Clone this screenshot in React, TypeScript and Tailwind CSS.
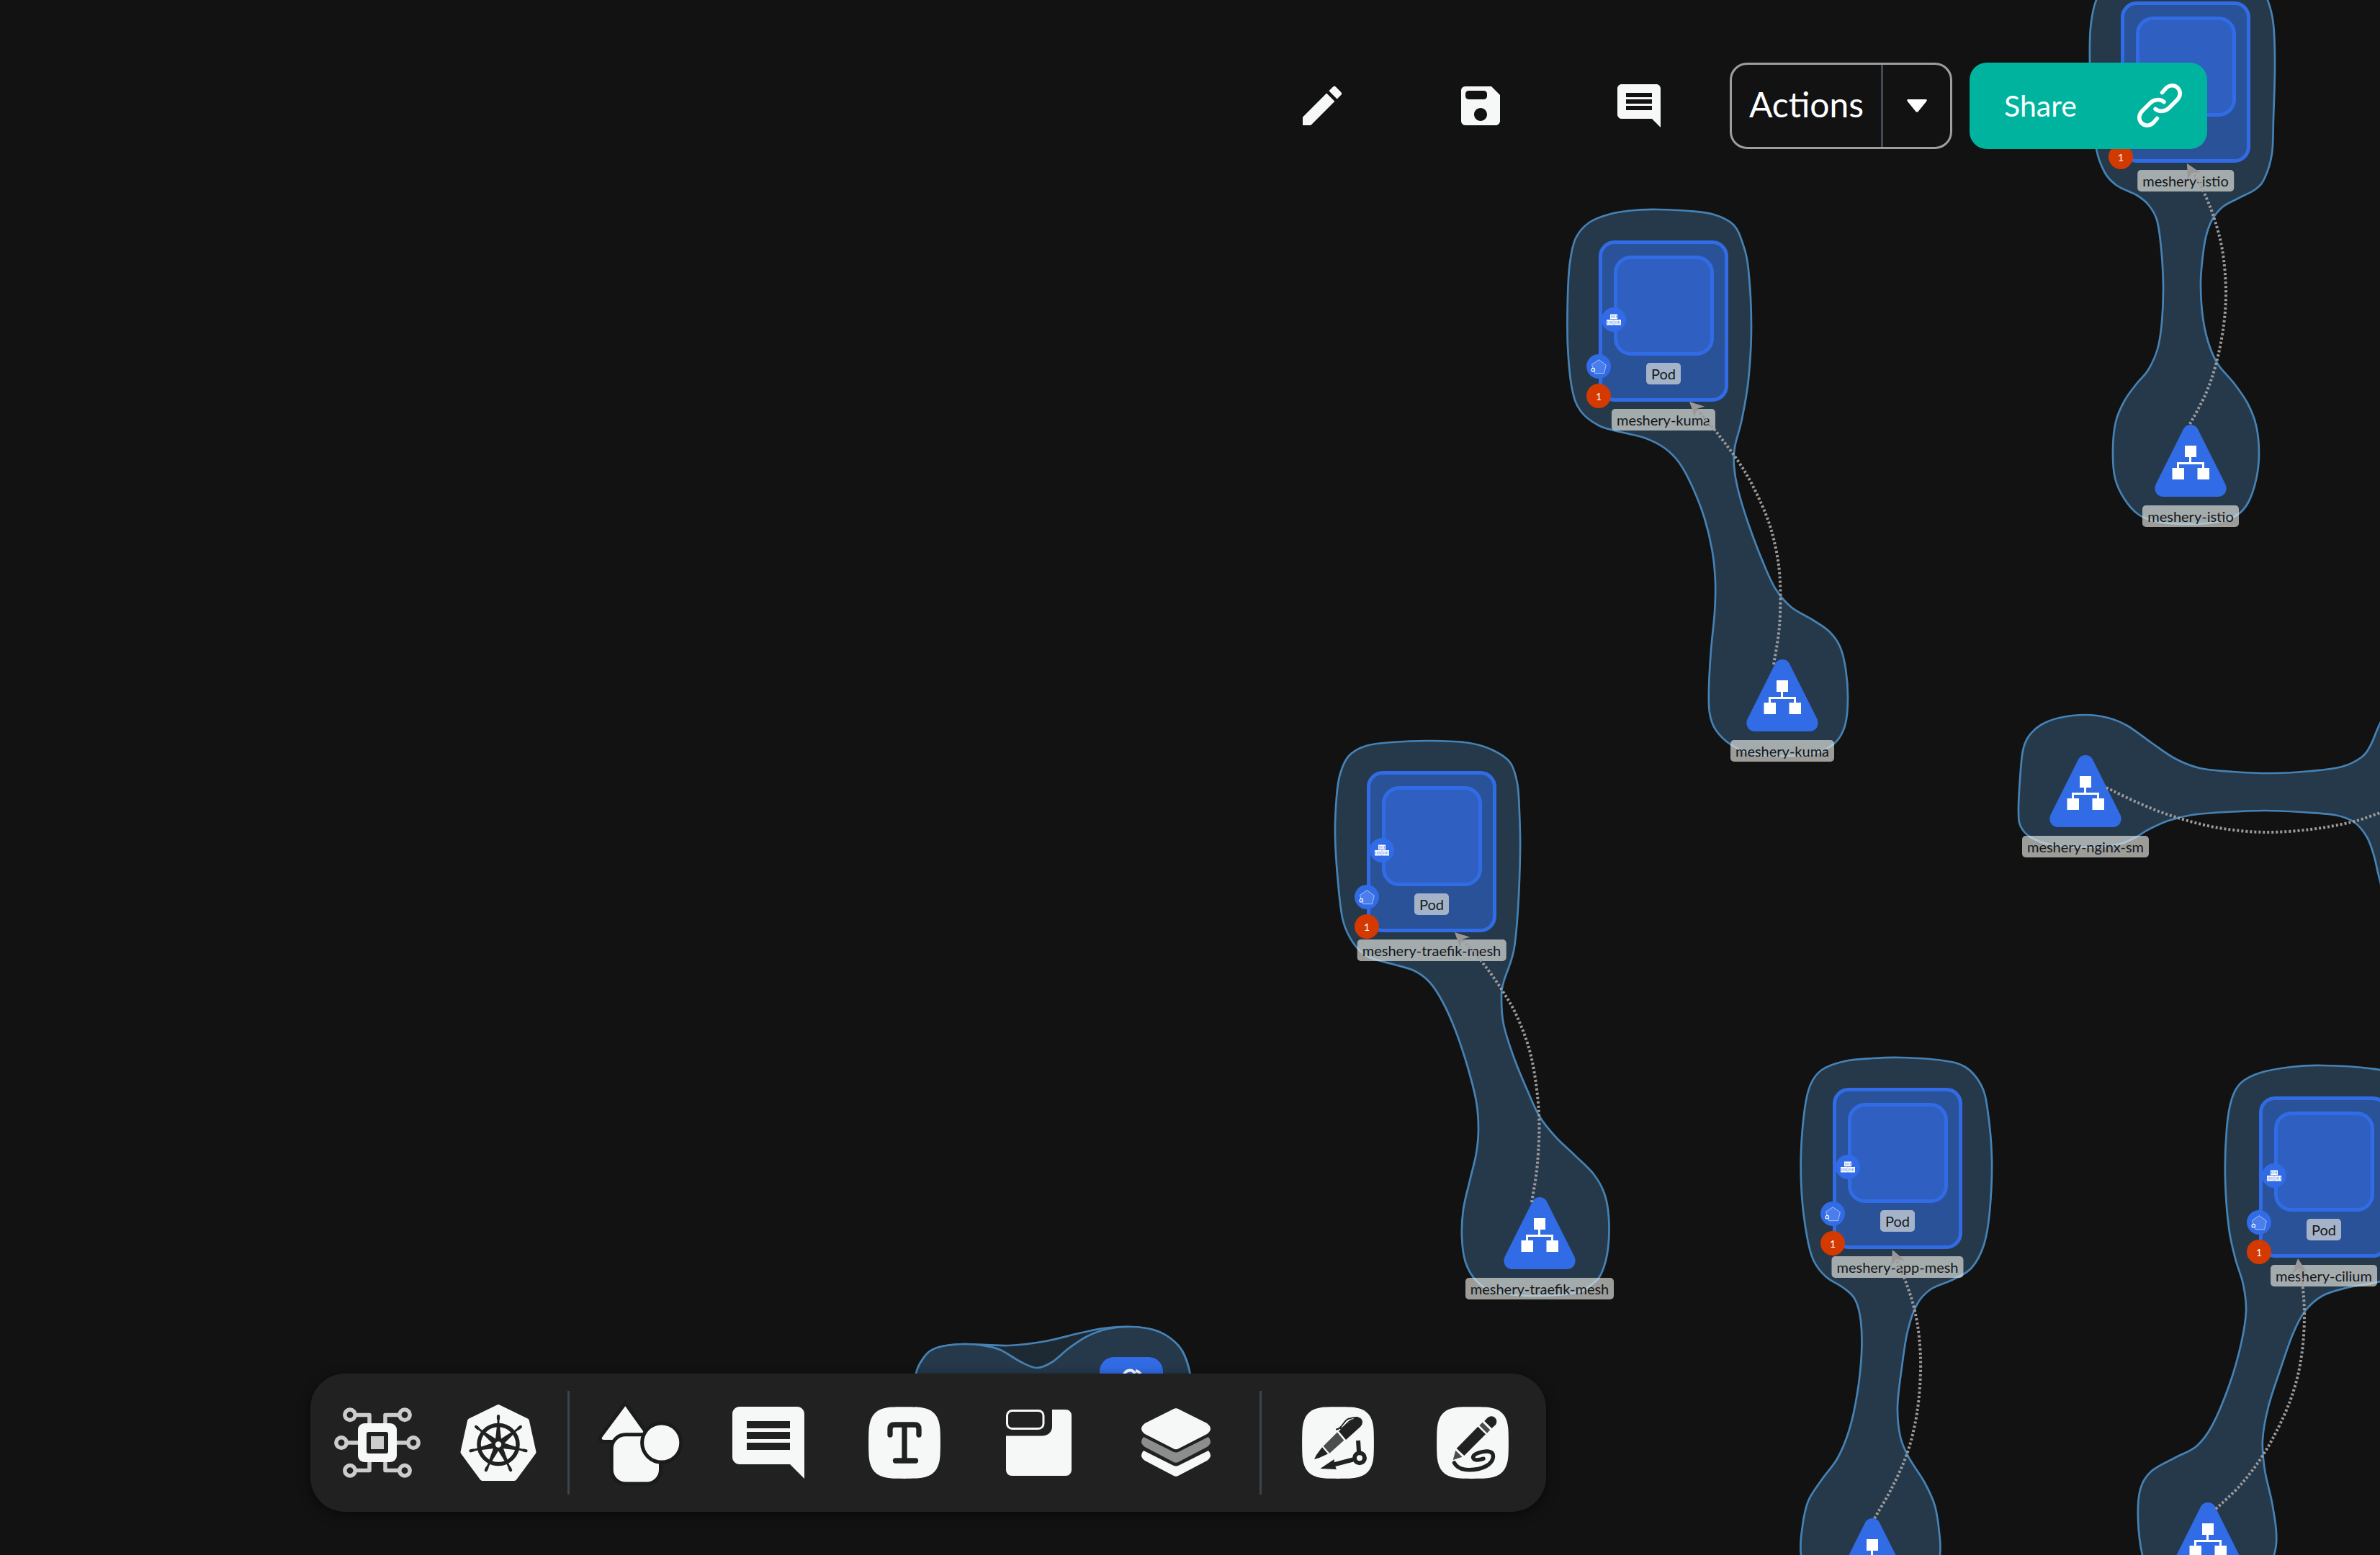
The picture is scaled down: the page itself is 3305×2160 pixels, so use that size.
import { type ReactNode } from "react";
import { MdComment, MdEdit } from "react-icons/md";

type Point = [number, number];

/* Smooth curve through the given points (Catmull-Rom converted to Bézier). */
function smooth(points: Point[], closed: boolean): string {
  const n = points.length;
  const at = (i: number): Point =>
    closed ? points[(i + n) % n] : points[Math.max(0, Math.min(n - 1, i))];
  let d = `M${points[0][0]} ${points[0][1]}`;
  const segments = closed ? n : n - 1;
  for (let i = 0; i < segments; i++) {
    const [p0, p1, p2, p3] = [at(i - 1), at(i), at(i + 1), at(i + 2)];
    d += `C${p1[0] + (p2[0] - p0[0]) / 6} ${p1[1] + (p2[1] - p0[1]) / 6} ${p2[0] - (p3[0] - p1[0]) / 6} ${p2[1] - (p3[1] - p1[1]) / 6} ${p2[0]} ${p2[1]}`;
  }
  return closed ? d + "Z" : d;
}

const hulls: Point[][] = [
  [[2303, 291], [2345, 293], [2380, 298], [2407, 312], [2420, 338], [2428, 375], [2432, 453], [2428, 527], [2419, 582], [2409, 621], [2408, 647], [2413, 678], [2427, 725], [2447, 778], [2465, 817], [2487, 843], [2517, 861], [2540, 877], [2555, 898], [2563, 929], [2566, 971], [2562, 1008], [2547, 1033], [2517, 1047], [2480, 1050], [2433, 1047], [2403, 1034], [2382, 1013], [2374, 990], [2373, 956], [2376, 903], [2381, 851], [2382, 809], [2378, 767], [2367, 720], [2350, 676], [2332, 643], [2311, 622], [2283, 608], [2250, 600], [2220, 591], [2195, 571], [2183, 540], [2177, 480], [2177, 412], [2180, 365], [2188, 331], [2207, 309], [2237, 297], [2270, 292]],
  [[3035, -42], [3105, -36], [3136, -22], [3149, 0], [3157, 34], [3159, 92], [3157, 165], [3155, 213], [3145, 247], [3132, 263], [3107, 276], [3087, 287], [3072, 305], [3063, 330], [3058, 364], [3056, 397], [3059, 441], [3067, 477], [3080, 506], [3102, 532], [3121, 560], [3133, 591], [3137, 630], [3133, 666], [3122, 698], [3107, 715], [3080, 725], [3037, 728], [2997, 725], [2970, 715], [2950, 693], [2937, 664], [2934, 625], [2938, 586], [2950, 557], [2967, 533], [2983, 514], [2996, 485], [3002, 448], [3004, 397], [3001, 344], [2995, 305], [2983, 284], [2967, 271], [2940, 258], [2923, 240], [2911, 207], [2904, 150], [2902, 87], [2903, 39], [2911, 0], [2930, -25], [2975, -38]],
  [[1987, 1029], [2040, 1032], [2073, 1042], [2097, 1059], [2107, 1088], [2110, 1129], [2111, 1182], [2108, 1262], [2102, 1321], [2088, 1364], [2085, 1386], [2088, 1423], [2103, 1471], [2122, 1517], [2138, 1551], [2160, 1579], [2187, 1605], [2213, 1631], [2228, 1658], [2234, 1691], [2233, 1734], [2225, 1766], [2213, 1782], [2187, 1796], [2120, 1800], [2073, 1793], [2050, 1779], [2035, 1753], [2030, 1718], [2032, 1680], [2041, 1640], [2050, 1602], [2053, 1568], [2050, 1530], [2038, 1482], [2021, 1431], [2003, 1391], [1985, 1364], [1963, 1348], [1933, 1339], [1900, 1329], [1880, 1311], [1865, 1279], [1858, 1225], [1854, 1161], [1856, 1107], [1861, 1075], [1873, 1050], [1897, 1036], [1933, 1031]],
  [[2640, 1469], [2697, 1473], [2729, 1482], [2751, 1507], [2760, 1541], [2766, 1610], [2763, 1683], [2755, 1729], [2738, 1761], [2713, 1777], [2681, 1791], [2662, 1812], [2649, 1849], [2641, 1899], [2635, 1954], [2639, 1996], [2651, 2025], [2673, 2060], [2687, 2092], [2693, 2129], [2694, 2160], [2685, 2215], [2600, 2240], [2515, 2215], [2501, 2160], [2503, 2120], [2511, 2085], [2530, 2055], [2552, 2025], [2568, 1986], [2579, 1936], [2585, 1881], [2584, 1835], [2576, 1805], [2560, 1789], [2535, 1773], [2518, 1750], [2509, 1716], [2502, 1660], [2501, 1601], [2506, 1541], [2514, 1507], [2530, 1486], [2562, 1474], [2600, 1470]],
  [[3225, 1480], [3290, 1484], [3320, 1492], [3342, 1520], [3355, 1600], [3350, 1720], [3335, 1765], [3305, 1780], [3258, 1789], [3225, 1800], [3201, 1821], [3184, 1853], [3166, 1904], [3150, 1954], [3142, 2000], [3145, 2042], [3155, 2087], [3161, 2129], [3158, 2160], [3140, 2210], [3065, 2225], [2990, 2200], [2975, 2160], [2969, 2110], [2972, 2069], [2987, 2044], [3020, 2025], [3050, 2009], [3072, 1980], [3096, 1923], [3112, 1867], [3119, 1821], [3115, 1784], [3104, 1748], [3095, 1705], [3090, 1637], [3092, 1569], [3099, 1527], [3112, 1504], [3139, 1490], [3182, 1482]],
  [[2896, 993], [2927, 997], [2954, 1008], [2988, 1032], [3021, 1054], [3055, 1067], [3101, 1072], [3155, 1074], [3209, 1071], [3252, 1065], [3279, 1052], [3292, 1035], [3305, 1005], [3330, 960], [3400, 960], [3400, 1260], [3320, 1262], [3305, 1223], [3297, 1190], [3287, 1163], [3269, 1142], [3242, 1132], [3195, 1128], [3145, 1126], [3091, 1128], [3044, 1132], [3011, 1140], [2984, 1152], [2964, 1164], [2941, 1173], [2897, 1177], [2850, 1174], [2820, 1163], [2806, 1148], [2803, 1127], [2805, 1083], [2809, 1043], [2817, 1023], [2834, 1007], [2860, 997]],
];

const outerGroup: Point[] = [[1262, 1960], [1272, 1908], [1280, 1890], [1291, 1877], [1309, 1870], [1340, 1867], [1401, 1869], [1452, 1863], [1498, 1852], [1533, 1845], [1570, 1843], [1601, 1847], [1624, 1858], [1642, 1877], [1653, 1910], [1658, 1960]];
const innerGroup: Point[] = [[1262, 1960], [1272, 1908], [1280, 1890], [1291, 1877], [1309, 1870], [1340, 1867], [1365, 1869], [1389, 1875], [1418, 1892], [1440, 1900], [1461, 1892], [1484, 1873], [1510, 1856], [1538, 1846], [1570, 1843], [1601, 1847], [1624, 1858], [1642, 1877], [1653, 1910], [1658, 1960]];

const edges: { points: Point[]; tip?: Point; angle?: number }[] = [
  { points: [[2463, 923], [2471, 870], [2472, 809], [2466, 762], [2452, 714], [2423, 655], [2385, 602], [2355, 567]], tip: [2346, 558], angle: -46 },
  { points: [[3041, 589], [3063, 547], [3078, 503], [3088, 451], [3091, 402], [3086, 347], [3074, 301], [3059, 264], [3044, 237]], tip: [3037, 227], angle: -29 },
  { points: [[2127, 1670], [2135, 1616], [2137, 1546], [2127, 1471], [2108, 1415], [2085, 1374], [2057, 1335], [2030, 1305]], tip: [2020, 1295], angle: -46 },
  { points: [[2603, 2109], [2627, 2067], [2649, 2017], [2662, 1963], [2667, 1905], [2665, 1857], [2658, 1817], [2647, 1782], [2633, 1748]], tip: [2628, 1736], angle: -22 },
  { points: [[3077, 2096], [3112, 2062], [3144, 2019], [3171, 1968], [3188, 1922], [3197, 1876], [3200, 1830], [3198, 1790], [3193, 1760]], tip: [3191, 1748], angle: -6 },
  { points: [[2925, 1094], [2971, 1116], [3021, 1135], [3081, 1150], [3145, 1156], [3209, 1152], [3265, 1142], [3305, 1129], [3340, 1115]] },
];

const pods = [
  { name: "meshery-kuma", x: 2220, y: 334 },
  { name: "meshery-istio", x: 2945, y: 2 },
  { name: "meshery-traefik-mesh", x: 1898, y: 1071 },
  { name: "meshery-app-mesh", x: 2545, y: 1511 },
  { name: "meshery-cilium", x: 3137, y: 1523 },
];

const services = [
  { id: "kuma", caption: "meshery-kuma", x: 2425, y: 916 },
  { id: "istio", caption: "meshery-istio", x: 2992, y: 590 },
  { id: "traefik", caption: "meshery-traefik-mesh", x: 2088, y: 1663 },
  { id: "nginx", caption: "meshery-nginx-sm", x: 2846, y: 1049 },
  { id: "app", x: 2550, y: 2109 },
  { id: "cilium", x: 3016, y: 2087 },
];

function NodeLabel({ children }: { children: string }) {
  return (
    <span className="rounded-[5px] bg-[rgba(230,232,226,0.65)] px-[7px] text-[20px] leading-[30px] font-normal whitespace-nowrap text-[#14171a]">
      {children}
    </span>
  );
}

function ContainerBadge() {
  return (
    <svg viewBox="-17 -17 34 34" className="absolute top-[93px] left-[4px] size-[34px]">
      <circle r="17" fill="#316ce6" />
      <path d="M-5 -7.5H5V-.8H-5ZM-10 0H-.2V7.4H-10ZM.2 0H10V7.4H.2Z" fill="#fff" />
      <path
        d="M-3.2 -6V-2.2M-1 -6V-2.2M1.2 -6V-2.2M3.4 -6V-2.2M-8.3 1.7V5.7M-6.2 1.7V5.7M-4 1.7V5.7M-1.9 1.7V5.7M2 1.7V5.7M4.2 1.7V5.7M6.3 1.7V5.7M8.4 1.7V5.7"
        stroke="#7ea2f0"
        strokeWidth="1"
      />
    </svg>
  );
}

function PodBadge() {
  return (
    <svg viewBox="-17 -17 34 34" className="absolute top-[158px] left-[-17px] size-[34px]">
      <circle r="17" fill="#316ce6" />
      <path d="M.3 -9.3L10.3 -2L7.5 9.7H-5.2L-9.6 -2.6Z" fill="#4a7eed" stroke="#a9c3f8" strokeWidth="1" strokeLinejoin="round" />
      <circle cx="-7.7" cy="4.7" r="2.3" fill="#4a7eed" stroke="#fff" strokeWidth="1.2" />
    </svg>
  );
}

function Pod({ name, x, y }: { name: string; x: number; y: number }) {
  return (
    <div className="absolute" style={{ left: x, top: y }}>
      <div className="flex h-[224px] w-[180px] flex-col items-center rounded-[22px] border-[5px] border-[#316ce6] bg-[#2a5298] pt-4">
        <div className="size-[139px] rounded-[24px] border-[5px] border-[#316ce6] bg-[#2f5fc0]" />
        <div className="mt-2.5 flex">
          <NodeLabel>Pod</NodeLabel>
        </div>
      </div>
      <ContainerBadge />
      <PodBadge />
      <span className="absolute top-[199px] left-[-17px] flex size-[34px] items-center justify-center rounded-full bg-[#d43900] text-[14px] text-white">
        1
      </span>
      <div className="absolute top-[234px] left-1/2 flex -translate-x-1/2">
        <NodeLabel>{name}</NodeLabel>
      </div>
    </div>
  );
}

function Service({ caption, x, y }: { caption?: string; x: number; y: number }) {
  return (
    <div className="absolute flex w-[100px] flex-col items-center gap-3" style={{ left: x, top: y }}>
      <svg viewBox="0 0 100 100" className="size-[100px] shrink-0">
        <path d="M40 6C44 -2 56 -2 60 6L98.5 83C102 91 97 100 88 100H12C3 100 -2 91 1.5 83Z" fill="#316ce6" />
        <path d="M42 29H58V45H51V52H69V60H76V76H59.5V60H66V55H34V60H41V76H24.5V60H31V52H48V45H42Z" fill="#fff" />
      </svg>
      {caption ? <NodeLabel>{caption}</NodeLabel> : null}
    </div>
  );
}

function Canvas() {
  return (
    <main className="absolute inset-0 overflow-hidden">
      <svg className="absolute inset-0 size-full" fill="none">
        <g stroke="#4682b4" strokeWidth="2.7">
          {hulls.map((points, i) => (
            <path key={i} d={smooth(points, true)} fill="#25394b" />
          ))}
          <path d={smooth(outerGroup, false)} fill="#1e2a33" />
          <path d={smooth(innerGroup, false)} fill="#25394b" />
        </g>
        <rect x="1527" y="1885" width="88" height="88" rx="20" fill="#316ce6" />
        <path d="M1561 1910a8 8 0 0 1 15 -2M1577 1904a9 9 0 0 1 7 6" stroke="#fff" strokeWidth="4" />
      </svg>
      {pods.map((p) => (
        <Pod key={p.name} {...p} />
      ))}
      {services.map((s) => (
        <Service key={s.id} caption={s.caption} x={s.x} y={s.y} />
      ))}
      <svg className="absolute inset-0 size-full" fill="none">
        {edges.map(({ points, tip, angle }, i) => (
          <g key={i}>
            <path d={smooth(points, false)} stroke="#9e9a9a" strokeWidth="4" strokeDasharray="3 3" />
            {tip ? (
              <path d="M0 0L10 20L0 14L-10 20Z" fill="#9b9797" transform={`translate(${tip[0]} ${tip[1]}) rotate(${angle})`} />
            ) : null}
          </g>
        ))}
      </svg>
    </main>
  );
}

function SaveIcon() {
  return (
    <svg viewBox="0 0 24 24" className="size-[72px]" fill="currentColor" fillRule="evenodd">
      <path d="M17 3H5c-1.11 0-2 .9-2 2v14c0 1.1.89 2 2 2h14c1.1 0 2-.9 2-2V7l-4-4zM12 19c-1.66 0-3-1.34-3-3s1.34-3 3-3 3 1.34 3 3-1.34 3-3 3zM6.5 5h7a1.5 1.5 0 0 1 1.5 1.5v1a1.5 1.5 0 0 1-1.5 1.5h-7a1.5 1.5 0 0 1-1.5-1.5v-1a1.5 1.5 0 0 1 1.5-1.5z" />
    </svg>
  );
}

function ChainIcon() {
  return (
    <svg viewBox="0 0 66 66" className="size-[66px]" fill="none" stroke="currentColor" strokeWidth="5.5" strokeLinecap="round">
      <path d="M36.5 14.5L40.5 10C45 4 53 3 58 8C63 13 62 20 57 25L46 36C41 41 33 42 27 37.5" />
      <path d="M29.5 50.5L25.5 55C21 61 13 62 8 57C3 52 4 45 9 40L20 29C25 24 33 23 39 27.5" />
    </svg>
  );
}

function TopBar() {
  return (
    <header className="relative flex items-center justify-end gap-6 pt-[87px] pr-[240px]">
      <div className="mr-[66px] flex items-center gap-[148px] text-[#f6f8f8]">
        <button type="button" aria-label="Edit"><MdEdit className="size-[72px]" /></button>
        <button type="button" aria-label="Save"><SaveIcon /></button>
        <button type="button" aria-label="Comment"><MdComment className="size-[72px]" /></button>
      </div>
      <div className="flex h-[120px] rounded-[24px] border-[3px] border-[#9e9e9e] text-white">
        <button type="button" className="w-[207px] pb-1 text-center text-[48px] font-normal">Actions</button>
        <button type="button" aria-label="More actions" className="flex w-[96px] items-center justify-center border-l-[3px] border-[#434b55]">
          <svg viewBox="0 0 28 18" className="w-7" fill="currentColor">
            <path d="M2 0H26Q29 0 27 3L16 16.5Q14 19 12 16.5L1 3Q-1 0 2 0Z" />
          </svg>
        </button>
      </div>
      <button type="button" className="flex h-[120px] w-[330px] items-center justify-between rounded-[24px] bg-[#00b39f] pr-[33px] pl-12 text-[41px] font-normal text-white">
        Share
        <ChainIcon />
      </button>
    </header>
  );
}

const squircle =
  "M32 .5C40 0 60 0 68 .5C89 2 98 11 99.5 32C100 40 100 60 99.5 68C98 89 89 98 68 99.5C60 100 40 100 32 99.5C11 98 2 89 .5 68C0 60 0 40 .5 32C2 11 11 2 32 .5Z";

function ComponentsIcon() {
  return (
    <svg viewBox="0 0 120 98" className="h-[98px] w-[120px]" fill="none">
      <g stroke="#cbcccb" strokeWidth="5.5">
        {[[22, 10.3], [98, 10.3], [10, 49], [110, 49], [22, 87.7], [98, 87.7]].map(([x, y]) => (
          <circle key={`${x}-${y}`} cx={x} cy={y} r="7.2" />
        ))}
        <path d="M30 10.5H49V24M90 10.5H71V24M17 49H34M103 49H86M30 87.5H49V74M90 87.5H71V74" strokeLinejoin="round" />
      </g>
      <rect x="33" y="22" width="54" height="54" rx="9" fill="#f6f8f8" />
      <rect x="45" y="34" width="30" height="30" rx="3" fill="#212121" />
      <rect x="51" y="40" width="18" height="18" fill="#cbcccb" />
    </svg>
  );
}

function KubernetesIcon() {
  const spokes = [0, 1, 2, 3, 4, 5, 6];
  return (
    <svg viewBox="0 0 106 106" className="size-[106px]">
      <path d="M53 4L92 23L101.5 66L75 102H31L4.5 66L14 23Z" fill="#f6f8f8" stroke="#f6f8f8" strokeWidth="8" strokeLinejoin="round" />
      <g transform="translate(53 55.5)" stroke="#212121" fill="#212121">
        <circle r="27" fill="none" strokeWidth="5.5" />
        {spokes.map((s) => (
          <g key={s} transform={`rotate(${(s * 360) / 7})`}>
            <path d="M0 -27V-38" strokeWidth="3" />
            <path d="M0 -36V-39.5" strokeWidth="4.2" strokeLinecap="round" />
            <path d="M-2 -26H2L4 -7H-4Z" stroke="none" />
          </g>
        ))}
        <circle r="8.5" stroke="none" />
        <circle r="4.2" fill="#f6f8f8" stroke="none" />
      </g>
    </svg>
  );
}

function ShapesIcon() {
  return (
    <svg viewBox="0 0 118 119" className="h-[119px] w-[118px] [paint-order:stroke]" fill="#f6f8f8" stroke="#1b1b1b" strokeWidth="10">
      <path d="M37.3 8.3L67 50Q70 55 65 55H8Q3 55 5.5 51Z" />
      <rect x="20.7" y="50.3" width="63.3" height="63.3" rx="17" />
      <circle cx="87.7" cy="59" r="24.6" />
    </svg>
  );
}

function TextIcon() {
  return (
    <svg viewBox="0 0 100 100" className="size-[100px]" fill="none">
      <path d={squircle} fill="#f6f8f8" />
      <path d="M30 39V31Q30 25 36 25H64Q70 25 70 31V39M50 25V75M37.5 75H65.5" stroke="#212121" strokeWidth="7.3" strokeLinecap="round" />
    </svg>
  );
}

function SectionIcon() {
  return (
    <svg viewBox="0 0 91 92" className="h-[92px] w-[91px]" fill="none">
      <rect x="1.5" y="1.5" width="50.5" height="25" rx="7" stroke="#f6f8f8" strokeWidth="3" />
      <path d="M64 0H83a8 8 0 0 1 8 8V84a8 8 0 0 1-8 8H8a8 8 0 0 1-8-8V36.5H50C58 36.5 64 31 64 24Z" fill="#f6f8f8" />
    </svg>
  );
}

function LayersIcon() {
  return (
    <svg viewBox="0 0 98 96" className="h-[96px] w-[98px]">
      <path d="M45 1.5Q49 -1 53 1.5L92 21Q102 28.5 92 36L53 56Q49 58.5 45 56L6 36Q-4 28.5 6 21Z" fill="#f6f8f8" />
      <path d="M4 40L45 60.5Q49 62.5 53 60.5L94 40Q101 48 92 54L53 74.5Q49 77 45 74.5L6 54Q-3 48 4 40Z" fill="#8c8e8d" />
      <path d="M4 59L45 79.5Q49 81.5 53 79.5L94 59Q101 67 92 73L53 93.5Q49 96 45 93.5L6 73Q-3 67 4 59Z" fill="#f6f8f8" />
    </svg>
  );
}

function PenIcon() {
  return (
    <svg viewBox="0 0 100 100" className="size-[100px]" fill="#212121">
      <path d={squircle} fill="#f6f8f8" />
      <path d="M17 73L20 67L28 56.3L36 65.5L24 71Z" />
      <path d="M29.7 54.7L49 35.5L58.3 46.7L38.3 64.7Z" fill="#4b4d4c" />
      <path d="M51 34L71 17C77 12.5 83.7 15 84 21.5Q84 25 81 28L61 46Z" />
      <path d="M47 31.5C56 32 58 17 66 16.5Q71 14.5 78 15M53 31C60 29 62 21 70 18" fill="none" stroke="#212121" strokeWidth="1.8" />
      <circle cx="80" cy="71.3" r="7" fill="none" stroke="#212121" strokeWidth="6" />
      <path d="M78 47L79 62.5M71 73.5L44 80.5" stroke="#212121" strokeWidth="6" />
      <path d="M25.3 86L44.7 73L45 80L48 87Z" />
    </svg>
  );
}

function PencilIcon() {
  return (
    <svg viewBox="0 0 100 100" className="size-[100px]" fill="#212121">
      <path d={squircle} fill="#f6f8f8" />
      <path d="M22.7 74L26.3 60.7L35.5 69.7Z" fill="#4b4d4c" />
      <path d="M27.7 58L57.3 27.7L68 38.3L38.3 68Z" />
      <path d="M59.3 26L63.7 21.7L74.3 32.3L70 36.7Z" fill="#4b4d4c" />
      <path d="M66.3 20L70 16C77 9 87 17 82 25L76.5 30Z" />
      <path d="M24.5 78C29 86.5 37 87.7 45 87.7C64 87.7 78 80 78.5 69C78.5 59.5 66 61.5 57 64.5C50 67 49 71 53 73.5C57 75 61 73 65 72.3" fill="none" stroke="#212121" strokeWidth="5.5" strokeLinecap="round" />
    </svg>
  );
}

function Tool({ label, children }: { label: string; children: ReactNode }) {
  return (
    <button type="button" aria-label={label} className="flex h-[192px] items-center justify-center">
      {children}
    </button>
  );
}

function Toolbar() {
  return (
    <footer className="relative flex pb-[60px] pl-[431px]">
      <nav className="flex h-[192px] items-center rounded-[48px] bg-[#212121] px-[9px] text-[#f6f8f8] shadow-[0_4px_16px_rgba(0,0,0,0.5)]">
        <div className="grid grid-cols-[168px_168px]">
          <Tool label="Components"><ComponentsIcon /></Tool>
          <Tool label="Kubernetes"><KubernetesIcon /></Tool>
        </div>
        <div className="mx-3 h-36 w-[3px] bg-[#3c444d]" />
        <div className="grid grid-cols-[174px_180px_198px_174px_208px]">
          <Tool label="Shapes"><ShapesIcon /></Tool>
          <Tool label="Comment"><MdComment className="size-[120px]" /></Tool>
          <Tool label="Text"><TextIcon /></Tool>
          <Tool label="Section"><SectionIcon /></Tool>
          <Tool label="Layers"><LayersIcon /></Tool>
        </div>
        <div className="mx-3 h-36 w-[3px] bg-[#3c444d]" />
        <div className="grid grid-cols-[187px_187px]">
          <Tool label="Pen"><PenIcon /></Tool>
          <Tool label="Pencil"><PencilIcon /></Tool>
        </div>
      </nav>
    </footer>
  );
}

export default function App() {
  return (
    <div className="relative flex min-h-screen flex-col justify-between overflow-hidden bg-[#121212] font-['Lato',sans-serif]">
      <Canvas />
      <TopBar />
      <Toolbar />
    </div>
  );
}
